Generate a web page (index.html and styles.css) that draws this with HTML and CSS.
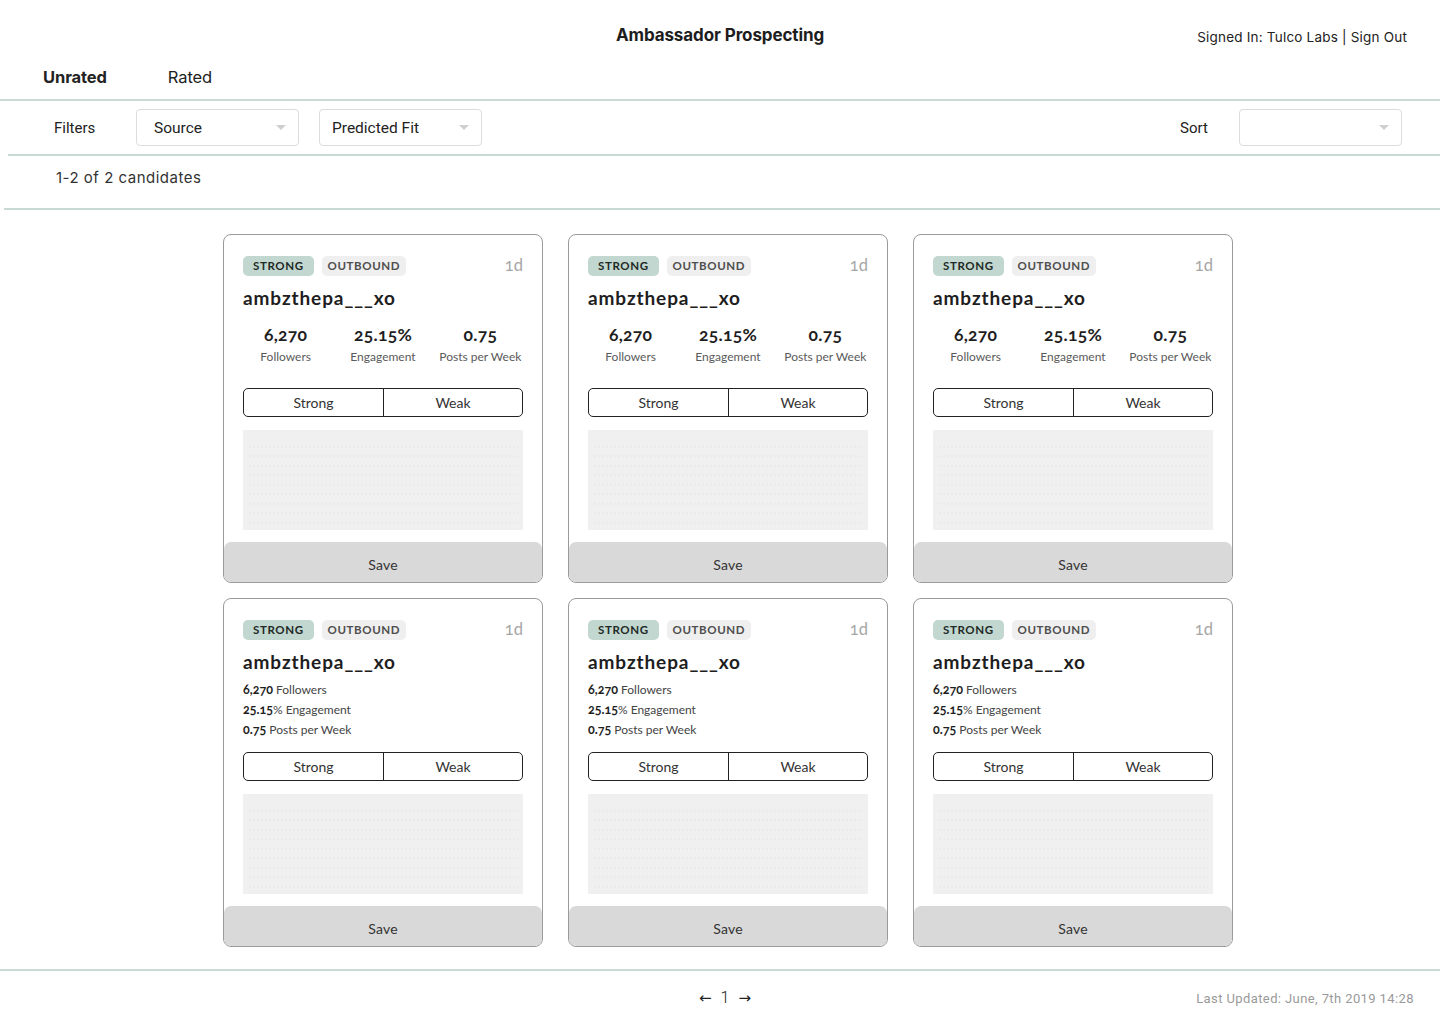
FILE: index.html
```html
<!DOCTYPE html>
<html lang="en">
<head>
<meta charset="utf-8">
<title>Ambassador Prospecting</title>
<link rel="stylesheet" href="styles.css">
</head>
<body>
<header class="topbar">
  <div></div>
  <h1 class="title">Ambassador Prospecting</h1>
  <div class="signin">Signed In: Tulco Labs | Sign Out</div>
</header>
<nav class="tabs">
  <span class="tab active">Unrated</span>
  <span class="tab">Rated</span>
</nav>
<section class="filters">
  <span class="filter-label">Filters</span>
  <div class="select"><span>Source</span><i class="caret"></i></div>
  <div class="select select-tight"><span>Predicted Fit</span><i class="caret"></i></div>
  <div class="spacer"></div>
  <span class="sort-label">Sort</span>
  <div class="select"><span></span><i class="caret"></i></div>
</section>
<div class="count">1-2 of 2 candidates</div>

<main class="grid">
  <article class="card">
    <div class="card-body">
      <div class="card-top"><span class="badge strong">Strong</span><span class="badge source">Outbound</span><span class="age">1d</span></div>
      <div class="name">ambzthepa___xo</div>
      <div class="stats">
        <div class="stat"><b>6,270</b><span>Followers</span></div>
        <div class="stat"><b>25.15%</b><span>Engagement</span></div>
        <div class="stat"><b>0.75</b><span>Posts per Week</span></div>
      </div>
      <div class="toggle"><span>Strong</span><span>Weak</span></div>
      <div class="notes"></div>
    </div>
    <div class="save">Save</div>
  </article>
  <article class="card">
    <div class="card-body">
      <div class="card-top"><span class="badge strong">Strong</span><span class="badge source">Outbound</span><span class="age">1d</span></div>
      <div class="name">ambzthepa___xo</div>
      <div class="stats">
        <div class="stat"><b>6,270</b><span>Followers</span></div>
        <div class="stat"><b>25.15%</b><span>Engagement</span></div>
        <div class="stat"><b>0.75</b><span>Posts per Week</span></div>
      </div>
      <div class="toggle"><span>Strong</span><span>Weak</span></div>
      <div class="notes"></div>
    </div>
    <div class="save">Save</div>
  </article>
  <article class="card">
    <div class="card-body">
      <div class="card-top"><span class="badge strong">Strong</span><span class="badge source">Outbound</span><span class="age">1d</span></div>
      <div class="name">ambzthepa___xo</div>
      <div class="stats">
        <div class="stat"><b>6,270</b><span>Followers</span></div>
        <div class="stat"><b>25.15%</b><span>Engagement</span></div>
        <div class="stat"><b>0.75</b><span>Posts per Week</span></div>
      </div>
      <div class="toggle"><span>Strong</span><span>Weak</span></div>
      <div class="notes"></div>
    </div>
    <div class="save">Save</div>
  </article>

  <article class="card">
    <div class="card-body">
      <div class="card-top"><span class="badge strong">Strong</span><span class="badge source">Outbound</span><span class="age">1d</span></div>
      <div class="name">ambzthepa___xo</div>
      <div class="stat-list">
        <div><b>6,270</b> Followers</div>
        <div><b>25.15</b>% Engagement</div>
        <div><b>0.75</b> Posts per Week</div>
      </div>
      <div class="toggle"><span>Strong</span><span>Weak</span></div>
      <div class="notes"></div>
    </div>
    <div class="save">Save</div>
  </article>
  <article class="card">
    <div class="card-body">
      <div class="card-top"><span class="badge strong">Strong</span><span class="badge source">Outbound</span><span class="age">1d</span></div>
      <div class="name">ambzthepa___xo</div>
      <div class="stat-list">
        <div><b>6,270</b> Followers</div>
        <div><b>25.15</b>% Engagement</div>
        <div><b>0.75</b> Posts per Week</div>
      </div>
      <div class="toggle"><span>Strong</span><span>Weak</span></div>
      <div class="notes"></div>
    </div>
    <div class="save">Save</div>
  </article>
  <article class="card">
    <div class="card-body">
      <div class="card-top"><span class="badge strong">Strong</span><span class="badge source">Outbound</span><span class="age">1d</span></div>
      <div class="name">ambzthepa___xo</div>
      <div class="stat-list">
        <div><b>6,270</b> Followers</div>
        <div><b>25.15</b>% Engagement</div>
        <div><b>0.75</b> Posts per Week</div>
      </div>
      <div class="toggle"><span>Strong</span><span>Weak</span></div>
      <div class="notes"></div>
    </div>
    <div class="save">Save</div>
  </article>
</main>

<footer class="footer">
  <div></div>
  <div class="pager"><span class="arrow">&larr;</span><span class="page">1</span><span class="arrow">&rarr;</span></div>
  <div class="updated">Last Updated: June, 7th 2019 14:28</div>
</footer>
</body>
</html>
```

FILE: styles.css
```css
html, body {
  margin: 0;
  padding: 0;
  background: #ffffff;
  color: #222222;
  font-family: Inter, "Liberation Sans", sans-serif;
}

.topbar {
  display: grid;
  grid-template-columns: 1fr auto 1fr;
  align-items: center;
  padding: 22px 33px 0 33px;
}
.title {
  margin: 0;
  font-size: 17px;
  font-weight: 700;
  line-height: 22px;
  color: #1d1d1d;
  letter-spacing: -0.1px;
}
.signin {
  justify-self: end;
  font-size: 13.5px;
  line-height: 22px;
  margin-top: 4px;
  letter-spacing: 0.2px;
  color: #222;
}

.tabs {
  display: flex;
  padding: 19px 0 12px 43px;
  border-bottom: 2px solid #cadbd5;
}
.tab {
  font-size: 16.5px;
  line-height: 20px;
  color: #222;
  letter-spacing: -0.1px;
}
.tab.active {
  font-weight: 700;
  margin-right: 61px;
}

.filters {
  display: flex;
  align-items: center;
  margin-left: 8px;
  padding: 8px 38px 8px 46px;
  border-bottom: 2px solid #cadbd5;
  font-family: Roboto, "Liberation Sans", sans-serif;
}
.filter-label {
  width: 82px;
  font-size: 15px;
  color: #222;
}
.select {
  box-sizing: border-box;
  width: 163px;
  height: 37px;
  border: 1px solid #dcdcdc;
  border-radius: 4px;
  display: flex;
  align-items: center;
  justify-content: space-between;
  padding: 0 12px 0 17px;
  margin-right: 20px;
  font-size: 15.5px;
  color: #222;
}
.select-tight { padding-left: 12px; }
.select:last-child { margin-right: 0; }
.caret {
  width: 0;
  height: 0;
  border-left: 5px solid transparent;
  border-right: 5px solid transparent;
  border-top: 5px solid #cfcfcf;
}
.spacer { flex: 1; }
.sort-label {
  font-size: 15px;
  width: 59px;
  color: #222;
}

.count {
  padding: 12px 0 20px 52px;
  margin-left: 4px;
  font-size: 15px;
  line-height: 20px;
  letter-spacing: 0.5px;
  color: #333;
  border-bottom: 2px solid #cadbd5;
}

.grid {
  display: grid;
  grid-template-columns: repeat(3, 320px);
  column-gap: 25px;
  row-gap: 15px;
  justify-content: center;
  padding: 24px 0 22px 16px;
  border-bottom: 2px solid #cadbd5;
}

.card {
  box-sizing: border-box;
  border: 1px solid #9a9a9a;
  border-radius: 8px;
  overflow: hidden;
  font-family: Lato, "Open Sans", sans-serif;
  font-variant-numeric: oldstyle-nums;
  display: flex;
  flex-direction: column;
}
.card-body {
  padding: 21px 19px 12px 19px;
}
.card-top {
  display: flex;
  align-items: center;
  height: 20px;
}
.badge {
  height: 20px;
  line-height: 20px;
  padding: 0 10px;
  border-radius: 5px;
  font-size: 11.5px;
  font-weight: 700;
  text-transform: uppercase;
  letter-spacing: 0.6px;
  margin-right: 8px;
}
.badge.strong { background: #c1d7cf; color: #1f2a26; }
.badge.source { background: #efefef; color: #4e4e4e; padding: 0 6px; }
.age {
  margin-left: auto;
  font-size: 16.5px;
  line-height: 20px;
  margin-top: -3px;
  color: #a6a6a6;
  font-weight: 400;
}

.name {
  margin-top: 10px;
  font-size: 19px;
  line-height: 24px;
  font-weight: 700;
  letter-spacing: 0.9px;
  color: #1e1e1e;
}

.stats {
  display: grid;
  grid-template-columns: 1fr 1fr 1fr;
  margin: 12px -6px 0 -6px;
  text-align: center;
}
.stat b {
  display: block;
  font-size: 17.5px;
  line-height: 26px;
  font-weight: 700;
  color: #1e1e1e;
  letter-spacing: 0.3px;
}
.stat span {
  display: block;
  font-size: 12px;
  line-height: 18px;
  color: #5a5a5a;
  font-weight: 400;
}

.stat-list {
  margin-top: 6px;
  font-size: 12px;
  line-height: 20px;
  color: #444;
}
.stat-list b {
  font-weight: 700;
  font-size: 12.5px;
  color: #1e1e1e;
}

.toggle {
  margin-top: 22px;
  display: grid;
  grid-template-columns: 1fr 1fr;
  height: 29px;
  box-sizing: border-box;
  border: 1px solid #222;
  border-radius: 5px;
  font-size: 14px;
  color: #333;
}
.stat-list + .toggle { margin-top: 12px; }
.toggle span {
  display: flex;
  align-items: center;
  justify-content: center;
}
.toggle span + span { border-left: 1px solid #222; }

.notes {
  margin-top: 13px;
  height: 100px;
  box-sizing: border-box;
  padding: 12px 5px 2px 5px;
  background: radial-gradient(circle, #dadada 0.45px, transparent 0.8px) 0 0 / 4px 9.5px content-box, #f0f0f0;
}

.save {
  height: 40px;
  background: #d9d9d9;
  border-radius: 7px 7px 0 0;
  display: flex;
  align-items: center;
  justify-content: center;
  font-size: 14px;
  color: #333;
  padding-top: 4px;
  box-sizing: border-box;
  letter-spacing: 0.2px;
}

.footer {
  display: grid;
  grid-template-columns: 1fr auto 1fr;
  align-items: center;
  padding: 17px 26px 0 26px;
  font-family: Roboto, "Liberation Sans", sans-serif;
}
.pager {
  display: flex;
  align-items: center;
  gap: 9px;
  font-size: 15px;
  line-height: 20px;
  color: #222;
  margin-left: 10px;
}
.pager .arrow {
  font-family: "DejaVu Sans", sans-serif;
  font-size: 15px;
}
.pager .page { font-size: 16px; font-weight: 300; }
.updated {
  justify-self: end;
  font-size: 13px;
  color: #9a9a9a;
  letter-spacing: 0.4px;
}
```
